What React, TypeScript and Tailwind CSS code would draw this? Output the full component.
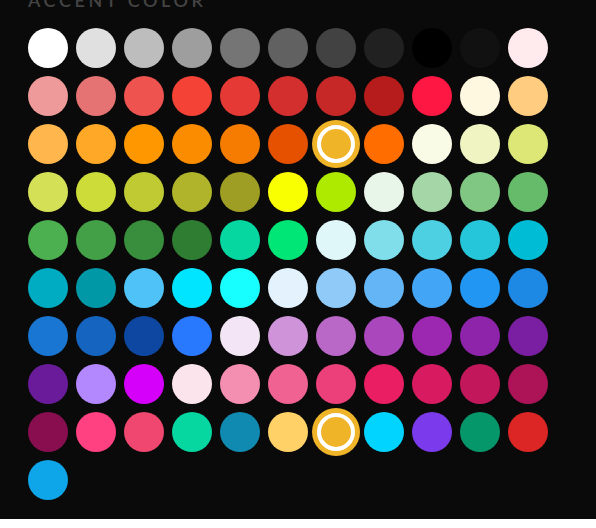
import React from 'react';

const colors: string[] = [
  '#ffffff', '#e0e0e0', '#bdbdbd', '#9e9e9e', '#757575', '#616161', '#424242', '#212121', '#000000', '#111111', '#ffebee',
  '#ef9a9a', '#e57373', '#ef5350', '#f44336', '#e53935', '#d32f2f', '#c62828', '#b71c1c', '#ff1744', '#fff8e1', '#ffcc80',
  '#ffb74d', '#ffa726', '#ff9800', '#fb8c00', '#f57c00', '#e65100', '#f0b429', '#ff6d00', '#f9fbe7', '#f0f4c3', '#dce775',
  '#d4e157', '#cddc39', '#c0ca33', '#afb42b', '#9e9d24', '#f9ff00', '#aeea00', '#e8f5e9', '#a5d6a7', '#81c784', '#66bb6a',
  '#4caf50', '#43a047', '#388e3c', '#2e7d32', '#06d6a0', '#00e676', '#e0f7fa', '#80deea', '#4dd0e1', '#26c6da', '#00bcd4',
  '#00acc1', '#0097a7', '#4fc3f7', '#00e5ff', '#18ffff', '#e3f2fd', '#90caf9', '#64b5f6', '#42a5f5', '#2196f3', '#1e88e5',
  '#1976d2', '#1565c0', '#0d47a1', '#2979ff', '#f3e5f5', '#ce93d8', '#ba68c8', '#ab47bc', '#9c27b0', '#8e24aa', '#7b1fa2',
  '#6a1b9a', '#b388ff', '#d500f9', '#fce4ec', '#f48fb1', '#f06292', '#ec407a', '#e91e63', '#d81b60', '#c2185b', '#ad1457',
  '#880e4f', '#ff4081', '#ef476f', '#06d6a0', '#118ab2', '#ffd166', '#f0b429', '#00d4ff', '#7c3aed', '#059669', '#dc2626',
  '#0ea5e9',
];

const selected = '#f0b429';

export default function App() {
  return (
    <div className="min-h-screen w-full bg-[#0a0a0a] px-7" style={{ fontFamily: 'Lato, "Open Sans", sans-serif' }}>
      <h2 className="-mt-[9px] text-lg leading-none font-semibold uppercase tracking-[0.2em] text-[#444444]">
        Accent Color
      </h2>
      <div className="mt-[19px] grid grid-cols-[repeat(11,40px)] gap-2">
        {colors.map((c, i) => {
          const active = c === selected;
          return (
            <button
              key={i}
              className={
                active
                  ? 'relative h-10 w-10 rounded-full ring-4 ring-[#f0b429]'
                  : 'relative h-10 w-10 rounded-full'
              }
              style={{ backgroundColor: c }}
              aria-label={c}
            >
              {active && <span className="absolute inset-[1px] rounded-full border-4 border-white" />}
            </button>
          );
        })}
      </div>
    </div>
  );
}
